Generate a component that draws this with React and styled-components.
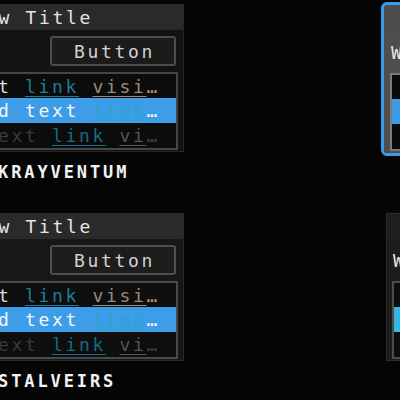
import React from 'react'
import styled, { createGlobalStyle } from 'styled-components'

const GlobalStyle = createGlobalStyle`
  html, body {
    margin: 0;
    background: #050505;
    overflow: hidden;
  }
`

const themes = [
    {
        name: 'KRAYVENTUM', rowPad: 4,
        title: '#2a2a2a', body: '#121212', border: '#262626',
        btnBg: '#1b1b1b', btnBorder: '#4c4c4c',
        listBg: '#0c0c0c', listBorder: '#474747',
        select: '#3d9de9', text: '#e2ddd6', link: '#1d7d9a', visited: '#9a8c7c', more: '#c98a52',
    },
    {
        name: 'W', rowPad: 14,
        focused: true,
        title: '#4c4c4c', body: '#4e4e4e', border: '#4e4e4e',
        btnBg: '#3c3c3c', btnBorder: '#777',
        listBg: '#0a0a0a', listBorder: '#7a7a7a',
        select: '#3c9ce8', text: '#e0e0e0', link: '#1d7d9a', visited: '#9a8c7c', more: '#c98a52',
    },
    {
        name: 'STALVEIRS', rowPad: 4,
        title: '#2a2a2a', body: '#171717', border: '#2a2a2a',
        btnBg: '#1d1d1d', btnBorder: '#4f4f4f',
        listBg: '#0e0e0e', listBorder: '#4a4a4a',
        select: '#3d9de9', text: '#e2ddd6', link: '#1d7d9a', visited: '#9a8c7c', more: '#c98a52',
    },
    {
        name: 'W', rowPad: 14,
        title: '#1e1e1e', body: '#1d1d1d', border: '#2c2c2c',
        btnBg: '#222', btnBorder: '#4a4a4a',
        listBg: '#0d0d0d', listBorder: '#4c4c4c',
        select: '#33b8e6', text: '#e0e0e0', link: '#1d7d9a', visited: '#9a8c7c', more: '#c98a52',
    },
]

function Preview({ t }) {
    return (
        <Cell>
            <Panel $t={t}>
                <TitleBar $t={t}>Window Title</TitleBar>
                <Body>
                    <ButtonRow>
                        <Label>Widget</Label>
                        <Button $t={t}>Button</Button>
                    </ButtonRow>
                    <List $t={t}>
                        <Row $pad={t.rowPad}>
                            <Plain $c={t.text}>Normal text </Plain>
                            <Link $c={t.link}>link</Link>
                            <Plain> </Plain>
                            <Link $c={t.visited}>visi</Link>
                            <Plain $c={t.more}>…</Plain>
                        </Row>
                        <Row $pad={t.rowPad} $bg={t.select}>
                            <Plain $c="#f6f6f6">Highlighted text </Plain>
                            <Link $c="#2aa6c6">link</Link>
                            <Plain $c="#f6f6f6">…</Plain>
                        </Row>
                        <Row $pad={t.rowPad}>
                            <Plain $c="#3a3a3a">Disabled text </Plain>
                            <Link $c="#1a6a82">link</Link>
                            <Plain> </Plain>
                            <Link $c="#555">vi</Link>
                            <Plain $c="#444">…</Plain>
                        </Row>
                    </List>
                </Body>
            </Panel>
            <Name>{t.name}</Name>
        </Cell>
    )
}

export default function App() {
    return (
        <>
            <GlobalStyle />
            <Gallery>
                {themes.map((t, i) => <Preview key={i} t={t} />)}
            </Gallery>
        </>
    )
}

const mono = `"DejaVu Sans Mono", monospace`

const Gallery = styled.div`
    display: grid;
    grid-template-columns: 333px 333px;
    column-gap: 202px;
    margin-left: -149px;
    padding-top: 4px;
    width: max-content;
`

const Cell = styled.div`
    height: 209px;
    display: flex;
    flex-direction: column;
`

const Panel = styled.div`
    height: 148px;
    box-sizing: border-box;
    background: ${p => p.$t.body};
    border: 1px solid ${p => p.$t.border};
    display: flex;
    flex-direction: column;
    overflow: hidden;
    font-family: ${mono};
    font-size: 18px;
    letter-spacing: 2.66px;
    ${p => p.$t.focused && `
        margin: 1px 0 0 -2px;
        outline: 3px solid #3a9be9;
        border-radius: 3px;
    `}
`

const TitleBar = styled.div`
    height: 25px;
    line-height: 25px;
    padding-left: 79px;
    background: ${p => p.$t.title};
    color: #e4e4e4;
    white-space: nowrap;
`

const Body = styled.div`
    padding: 0 5px 0 5px;
    display: flex;
    flex-direction: column;
`

const ButtonRow = styled.div`
    margin-top: 6px;
    height: 30px;
    display: flex;
    align-items: center;
    justify-content: space-between;
`

const Label = styled.span`
    color: #e6e6e6;
    padding-left: 1px;
`

const Button = styled.div`
    width: 126px;
    height: 30px;
    margin-right: 2px;
    box-sizing: border-box;
    border: 2px solid ${p => p.$t.btnBorder};
    border-radius: 3px;
    background: ${p => p.$t.btnBg};
    color: #d2d2d2;
    display: flex;
    align-items: center;
    justify-content: center;
    padding-left: 3px;
`

const List = styled.div`
    margin-top: 6px;
    height: 78px;
    box-sizing: border-box;
    border: 2px solid ${p => p.$t.listBorder};
    background: ${p => p.$t.listBg};
    display: grid;
    grid-template-rows: 24px 25px 25px;
`

const Row = styled.div`
    background: ${p => p.$bg || 'transparent'};
    padding-left: ${p => p.$pad}px;
    display: flex;
    align-items: center;
    white-space: pre;
`

const Plain = styled.span`
    color: ${p => p.$c || '#ddd'};
`

const Link = styled.span`
    color: ${p => p.$c};
    text-decoration: underline;
    text-underline-offset: 3px;
`

const Name = styled.div`
    margin-top: 10px;
    padding-left: 147px;
    height: 20px;
    line-height: 20px;
    font-family: ${mono};
    font-weight: bold;
    font-size: 17px;
    letter-spacing: 2.9px;
    color: #f2f2f2;
    white-space: nowrap;
`
